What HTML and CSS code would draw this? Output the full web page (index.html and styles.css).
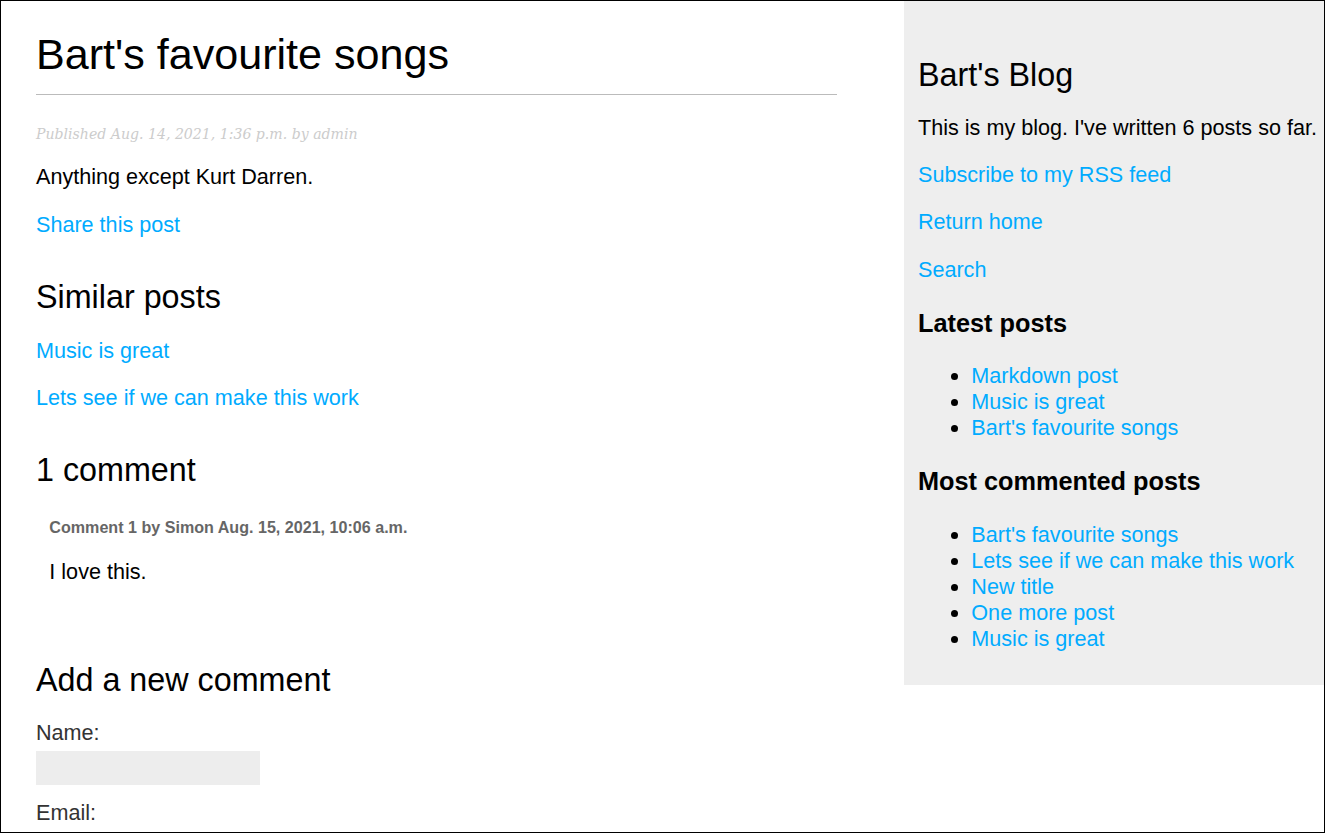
FILE: index.html
```html
<!DOCTYPE html>
<html lang="en">
<head>
<meta charset="utf-8">
<title>Bart's favourite songs</title>
<link rel="stylesheet" href="styles.css">
</head>
<body>
<div class="frame">
  <div class="layout">
    <main class="content">
      <h1 class="post-title">Bart's favourite songs</h1>
      <p class="date">Published Aug. 14, 2021, 1:36 p.m. by admin</p>
      <p>Anything except Kurt Darren.</p>
      <p><a href="#">Share this post</a></p>

      <h2 class="section-title">Similar posts</h2>
      <p><a href="#">Music is great</a></p>
      <p><a href="#">Lets see if we can make this work</a></p>

      <h2 class="section-title">1 comment</h2>
      <div class="comment">
        <p class="info">Comment 1 by Simon Aug. 15, 2021, 10:06 a.m.</p>
        <p>I love this.</p>
      </div>

      <h2 class="section-title">Add a new comment</h2>
      <form class="comment-form">
        <div class="field">
          <label class="field-label" for="name">Name:</label>
          <input class="field-input" type="text" id="name">
        </div>
        <div class="field">
          <label class="field-label" for="email">Email:</label>
          <input class="field-input" type="text" id="email">
        </div>
        <div class="field">
          <label class="field-label" for="body">Body:</label>
          <textarea class="field-input field-textarea" id="body"></textarea>
        </div>
        <button class="submit" type="button">Add comment</button>
      </form>
    </main>

    <aside class="sidebar">
      <h2 class="section-title blog-title">Bart's Blog</h2>
      <p class="blog-intro">This is my blog. I've written 6 posts so far.</p>
      <p><a href="#">Subscribe to my RSS feed</a></p>
      <p><a href="#">Return home</a></p>
      <p><a href="#">Search</a></p>

      <h3 class="side-title">Latest posts</h3>
      <ul class="post-list">
        <li><a href="#">Markdown post</a></li>
        <li><a href="#">Music is great</a></li>
        <li><a href="#">Bart's favourite songs</a></li>
      </ul>

      <h3 class="side-title">Most commented posts</h3>
      <ul class="post-list">
        <li><a href="#">Bart's favourite songs</a></li>
        <li><a href="#">Lets see if we can make this work</a></li>
        <li><a href="#">New title</a></li>
        <li><a href="#">One more post</a></li>
        <li><a href="#">Music is great</a></li>
      </ul>
    </aside>
  </div>
</div>
</body>
</html>
```

FILE: styles.css
```css
html, body {
  margin: 0;
  padding: 0;
}

body {
  font-family: "Liberation Sans", Arial, Helvetica, sans-serif;
  font-size: 21.6px;
  line-height: 1.205;
  color: #000;
  background: #fff;
}

.frame {
  height: 100vh;
  box-sizing: border-box;
  border: 1px solid #000;
  overflow: hidden;
}

.layout {
  display: flex;
  align-items: flex-start;
}

a {
  color: #00abff;
  text-decoration: none;
}

p {
  margin: 21.33px 0;
}

/* main column */
.content {
  width: 801px;
  padding-left: 35px;
  flex: none;
}

.post-title {
  font-size: 43.1px;
  font-weight: normal;
  margin: 28px 0 29.5px;
  padding: 0 0 13.5px 0;
  border-bottom: 1px solid #bbb;
}

.section-title {
  font-size: 32.3px;
  font-weight: normal;
  margin: 40px 0 0;
}

.date {
  color: #ccc;
  font-family: "DejaVu Serif", Georgia, serif;
  font-size: 14.1px;
  line-height: 18px;
  font-style: italic;
  margin: 15px 0 13px;
}

.comment {
  padding: 13.33px 13.33px 14.5px;
}

.comment .info {
  font-weight: bold;
  font-size: 16.1px;
  line-height: 19px;
  color: #666;
  margin: 15px 0;
}

/* form */
.comment-form {
  margin-top: 20px;
  display: flex;
  flex-direction: column;
  align-items: flex-start;
}

.field {
  display: flex;
  flex-direction: column;
  align-items: flex-start;
}

.field-label {
  color: #333;
  margin-bottom: 5.33px;
}

.field-input {
  box-sizing: border-box;
  width: 224px;
  height: 34.5px;
  margin: 0 0 15px;
  padding: 8px 13.33px;
  background: #ededed;
  border: 0;
  font-size: 16px;
  font-family: inherit;
}

.field-textarea {
  height: 120px;
}

.submit {
  font-weight: bold;
  background: #00abff;
  color: #fff;
  border: 0;
  padding: 13.33px 26.67px;
  font-size: 18.67px;
  text-transform: uppercase;
  font-family: inherit;
}

/* sidebar */
.sidebar {
  margin-left: auto;
  width: 420px;
  box-sizing: border-box;
  padding: 13.33px 0 12px 14px;
  background: #eeeeee;
  flex: none;
}

.blog-title {
  margin-top: 42px;
}

.blog-intro {
  margin-top: 19.5px;
}

.side-title {
  font-size: 25.3px;
  font-weight: bold;
  margin: 25px 0;
}

.post-list {
  margin: 21.33px 0;
  padding-left: 53.33px;
}
```
